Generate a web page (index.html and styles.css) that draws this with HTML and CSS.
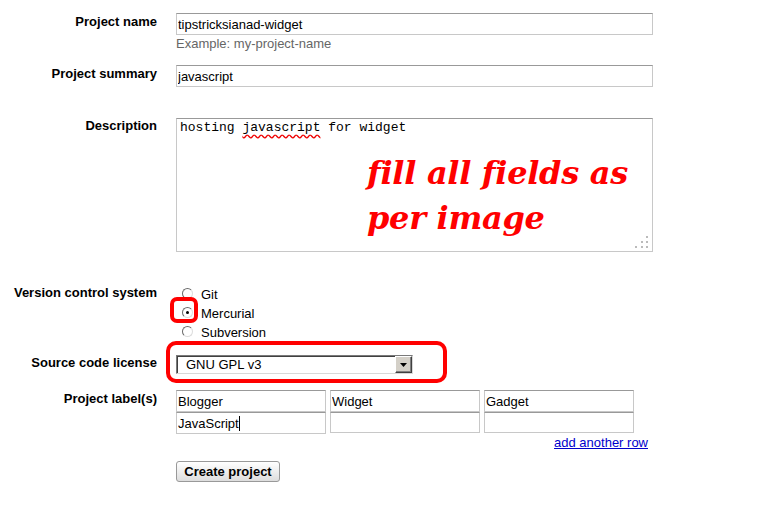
FILE: index.html
```html
<!doctype html>
<html lang="en">
  <head>
    <meta charset="UTF-8" />
    <meta name="viewport" content="width=device-width, initial-scale=1.0" />
    <title>Create a new project</title>
    <link rel="stylesheet" href="styles.css">
  </head>
  <body>
    <form class="create-form" onsubmit="return false;">
      <!-- Name -->
      <div class="field field-name">
        <label class="field-label" for="project-name">Project name</label>
        <div class="field-body">
          <input type="text" id="project-name" class="text-input wide" value="tipstricksianad-widget" />
          <div class="hint">Example: my-project-name</div>
        </div>
      </div>

      <!-- Summary -->
      <div class="field field-summary">
        <label class="field-label" for="project-summary">Project summary</label>
        <div class="field-body">
          <input type="text" id="project-summary" class="text-input wide" value="javascript" />
        </div>
      </div>

      <!-- Description -->
      <div class="field field-description">
        <label class="field-label label-flush">Description</label>
        <div class="field-body">
          <div class="textarea-box">
            hosting <span class="misspelled">javascript</span> for widget
            <div class="note">fill all fields as<br />per image</div>
            <svg class="grip" width="14" height="14" viewBox="0 0 14 14">
              <rect x="11" y="1" width="2" height="2" />
              <rect x="6" y="6" width="2" height="2" />
              <rect x="11" y="6" width="2" height="2" />
              <rect x="0" y="11" width="2" height="2" />
              <rect x="6" y="11" width="2" height="2" />
              <rect x="11" y="11" width="2" height="2" />
            </svg>
          </div>
        </div>
      </div>

      <!-- Version control -->
      <div class="field field-vcs">
        <label class="field-label label-flush">Version control system</label>
        <div class="field-body radio-list">
          <div class="radio-row"><span class="radio"></span>Git</div>
          <div class="radio-row"><span class="radio checked"></span>Mercurial</div>
          <div class="radio-row"><span class="radio"></span>Subversion</div>
          <div class="mark mark-radio"></div>
        </div>
      </div>

      <!-- License -->
      <div class="field field-license">
        <label class="field-label label-flush">Source code license</label>
        <div class="field-body license-body">
          <div class="select-box">
            <span class="select-value">GNU GPL v3</span>
            <span class="select-arrow">
              <svg width="7" height="4" viewBox="0 0 7 4"><path d="M0 0h7L3.5 4z" /></svg>
            </span>
          </div>
          <div class="mark mark-select"></div>
        </div>
      </div>

      <!-- Labels -->
      <div class="field field-labels">
        <label class="field-label">Project label(s)</label>
        <div class="field-body">
          <div class="label-grid">
            <input type="text" class="text-input" value="Blogger" />
            <input type="text" class="text-input" value="Widget" />
            <input type="text" class="text-input" value="Gadget" />
            <span class="caret-wrap">
              <input type="text" class="text-input" value="JavaScript" />
              <span class="caret"></span>
            </span>
            <input type="text" class="text-input" value="" />
            <input type="text" class="text-input" value="" />
          </div>
          <div class="add-row"><a href="#">add another row</a></div>
          <button class="create-btn" type="submit">Create project</button>
        </div>
      </div>
    </form>
  </body>
</html>
```

FILE: styles.css
```css
/* General */
body {
  margin: 0;
  background-color: #fff;
  color: #000;
  font-family: "Liberation Sans", Arial, sans-serif;
  font-size: 13px;
}

.create-form {
  padding-top: 13px;
}

/* Form rows */
.field {
  display: grid;
  grid-template-columns: 157px 477px;
  column-gap: 19px;
}

.field-label {
  text-align: right;
  font-weight: bold;
  line-height: 15px;
  padding-top: 1px;
}

.label-flush {
  padding-top: 0;
}

.field-name {
  margin-bottom: 14px;
}

.field-summary {
  margin-bottom: 31px;
}

.field-description {
  margin-bottom: 33px;
}

.field-vcs {
  margin-bottom: 13px;
}

.field-license {
  margin-bottom: 16px;
}

/* Inputs */
.text-input {
  box-sizing: border-box;
  height: 22px;
  width: 150px;
  margin: 0;
  padding: 0 1px;
  border: 1px solid #c8c8c8;
  border-top-color: #999;
  font-family: "Liberation Sans", Arial, sans-serif;
  font-size: 13px;
  color: #000;
  background: #fff;
}

.text-input.wide {
  width: 477px;
}

.hint {
  margin-top: 1px;
  line-height: 15px;
  color: #666;
}

/* Description box */
.textarea-box {
  position: relative;
  box-sizing: border-box;
  height: 134px;
  padding: 1px 3px;
  border: 1px solid #c8c8c8;
  border-top-color: #999;
  font-family: "Liberation Mono", "Courier New", monospace;
  font-size: 13px;
  line-height: 15px;
}

.misspelled {
  text-decoration: underline wavy #e00;
  text-underline-offset: 3px;
}

.note {
  position: absolute;
  left: 190px;
  top: 32px;
  color: #f00;
  font-family: "DejaVu Serif", serif;
  font-weight: bold;
  font-style: italic;
  font-size: 32px;
  line-height: 45px;
  letter-spacing: -0.3px;
  white-space: nowrap;
}

.grip {
  position: absolute;
  right: 3px;
  bottom: 2px;
  fill: #bbb;
}

/* Radios */
.radio-list {
  position: relative;
}

.radio-row {
  box-sizing: border-box;
  display: flex;
  align-items: flex-start;
  height: 19px;
  line-height: 18px;
  padding-top: 1px;
}

.radio {
  box-sizing: border-box;
  width: 11px;
  height: 11px;
  margin: 2px 8px 0 6px;
  border: 1px solid;
  border-color: #6a6a6a #dcdcdc #dcdcdc #6a6a6a;
  border-radius: 50%;
  background: #fff;
  position: relative;
}

.radio.checked::after {
  content: "";
  position: absolute;
  left: 3px;
  top: 3px;
  width: 3px;
  height: 3px;
  border-radius: 50%;
  background: #000;
}

/* Red annotation marks */
.mark {
  position: absolute;
  border: 4px solid #f00;
  box-sizing: border-box;
}

.mark-radio {
  left: -6px;
  top: 12px;
  width: 28px;
  height: 26px;
  border-radius: 7px;
}

.license-body {
  position: relative;
}

.mark-select {
  left: -10px;
  top: -14px;
  width: 281px;
  height: 42px;
  border-radius: 10px;
}

/* Select */
.select-box {
  box-sizing: border-box;
  display: flex;
  justify-content: space-between;
  width: 237px;
  height: 19px;
  border: 1px solid;
  border-color: #7a7a7a #d8d8d8 #d8d8d8 #7a7a7a;
  box-shadow: inset 1px 1px 0 #404040;
  background: #fff;
}

.select-value {
  padding-left: 9px;
  line-height: 17px;
}

.select-arrow {
  box-sizing: border-box;
  width: 17px;
  height: 17px;
  display: flex;
  align-items: center;
  justify-content: center;
  background: #d4d0c8;
  border: 1px solid;
  border-color: #fff #404040 #404040 #fff;
  box-shadow: inset -1px -1px 0 #808080;
}

.select-arrow svg {
  fill: #000;
}

/* Labels grid */
.label-grid {
  display: grid;
  grid-template-columns: 150px 150px 150px;
  column-gap: 4px;
}

.label-grid .text-input {
  height: 21px;
}

.label-grid .text-input:nth-child(-n+3) {
  height: 22px;
}

.caret-wrap {
  position: relative;
  display: block;
}

.caret {
  position: absolute;
  left: 63px;
  top: 4px;
  width: 1px;
  height: 15px;
  background: #000;
}

.add-row {
  width: 472px;
  margin-top: 1px;
  text-align: right;
  line-height: 15px;
}

.add-row a {
  color: #00c;
}

.create-btn {
  margin-top: 11px;
  box-sizing: border-box;
  width: 104px;
  height: 21px;
  padding: 0;
  border: 1px solid #999;
  border-radius: 3px;
  background: linear-gradient(#fff, #ddd);
  font-family: "Liberation Sans", Arial, sans-serif;
  font-size: 13px;
  font-weight: bold;
  color: #000;
}
```
